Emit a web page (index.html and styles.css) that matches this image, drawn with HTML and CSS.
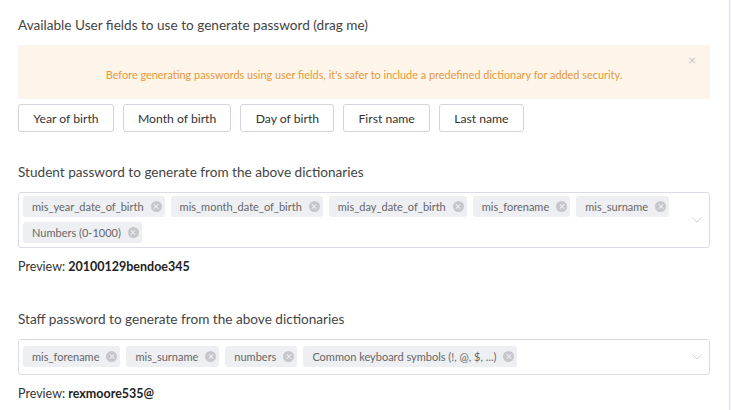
FILE: index.html
```html
<!DOCTYPE html>
<html lang="en">
<head>
    <meta charset="UTF-8">
    <meta name="viewport" content="width=device-width, initial-scale=1.0">
    <title>Password generator settings</title>
    <link rel="stylesheet" href="styles.css">
</head>
<body>

    <div class="page">
        <h3 class="section-title">Available User fields to use to generate password (drag me)</h3>

        <div class="alert">
            <p>Before generating passwords using user fields, it's safer to include a predefined dictionary for added security.</p>
            <span class="alert-close">&times;</span>
        </div>

        <div class="field-buttons">
            <button class="field-btn">Year of birth</button>
            <button class="field-btn">Month of birth</button>
            <button class="field-btn">Day of birth</button>
            <button class="field-btn">First name</button>
            <button class="field-btn">Last name</button>
        </div>

        <h3 class="section-title student-title">Student password to generate from the above dictionaries</h3>

        <div class="select-box">
            <div class="tags">
                <span class="tag">mis_year_date_of_birth <i class="tag-remove"></i></span>
                <span class="tag">mis_month_date_of_birth <i class="tag-remove"></i></span>
                <span class="tag">mis_day_date_of_birth <i class="tag-remove"></i></span>
                <span class="tag">mis_forename <i class="tag-remove"></i></span>
                <span class="tag">mis_surname <i class="tag-remove"></i></span>
                <span class="tag">Numbers (0-1000) <i class="tag-remove"></i></span>
            </div>
            <svg class="chevron" width="10" height="6" viewBox="0 0 10 6"><path d="M0.5 0.5 L5 5 L9.5 0.5" fill="none" stroke="#cfcfd8" stroke-width="1"/></svg>
        </div>

        <p class="preview">Preview: <strong>20100129bendoe345</strong></p>

        <h3 class="section-title staff-title">Staff password to generate from the above dictionaries</h3>

        <div class="select-box">
            <div class="tags">
                <span class="tag">mis_forename <i class="tag-remove"></i></span>
                <span class="tag">mis_surname <i class="tag-remove"></i></span>
                <span class="tag">numbers <i class="tag-remove"></i></span>
                <span class="tag">Common keyboard symbols (!, @, $, ...) <i class="tag-remove"></i></span>
            </div>
            <svg class="chevron" width="10" height="6" viewBox="0 0 10 6"><path d="M0.5 0.5 L5 5 L9.5 0.5" fill="none" stroke="#cfcfd8" stroke-width="1"/></svg>
        </div>

        <p class="preview">Preview: <strong>rexmoore535@</strong></p>
    </div>

</body>
</html>
```

FILE: styles.css
```css
/* Reset and Global Styles */
* {
    margin: 0;
    padding: 0;
    box-sizing: border-box;
}

body {
    font-family: Lato, "Open Sans", sans-serif;
    background-color: #f4f3fa;
    color: #333;
    width: 731px;
    height: 410px;
    overflow: hidden;
}

.page {
    width: 730px;
    height: 410px;
    background-color: white;
    border-right: 1px solid #e4e2f0;
    padding: 16px 19px 0 18px;
}

.section-title {
    font-size: 13.6px;
    font-weight: normal;
    color: #444;
    line-height: 19px;
}

.alert {
    position: relative;
    margin-top: 10px;
    height: 54px;
    background-color: #fdf5ea;
    border-radius: 3px;
    display: flex;
    align-items: center;
    justify-content: center;
    padding-top: 4px;
}

.alert p {
    font-size: 10.9px;
    color: #e8973a;
}

.alert-close {
    position: absolute;
    top: 6px;
    right: 14px;
    font-size: 14px;
    color: #c8c8c8;
}

.field-buttons {
    display: flex;
    gap: 9px;
    margin-top: 5px;
}

.field-btn {
    height: 28px;
    padding: 0 14.2px;
    background-color: white;
    border: 1px solid #d4d3de;
    border-radius: 3px;
    font-family: inherit;
    font-size: 12.2px;
    color: #333;
}

.student-title {
    margin-top: 31px;
}

.staff-title {
    margin-top: 36px;
}

.select-box {
    margin-top: 10px;
    min-height: 36px;
    border: 1px solid #dcdae6;
    border-radius: 3px;
    padding: 3px 4px 4px;
    display: flex;
    align-items: center;
}

.tags {
    flex: 1;
    display: flex;
    flex-wrap: wrap;
    gap: 5px 6px;
}

.tag {
    display: inline-flex;
    align-items: center;
    height: 21px;
    padding: 0 3px 0 9px;
    background-color: #eeeff2;
    border-radius: 3px;
    font-size: 11px;
    color: #666;
}

.tag-remove {
    position: relative;
    display: inline-block;
    width: 11px;
    height: 11px;
    margin-left: 7px;
    border-radius: 50%;
    background-color: #c6c6cc;
}

.tag-remove::before,
.tag-remove::after {
    content: "";
    position: absolute;
    left: 2.5px;
    top: 5px;
    width: 6px;
    height: 1px;
    background-color: #eeeff2;
    transform: rotate(45deg);
}

.tag-remove::after {
    transform: rotate(-45deg);
}

.chevron {
    margin: 0 3px 0 10px;
}

.preview {
    margin-top: 11px;
    font-size: 12.5px;
    color: #333;
}

.preview strong {
    color: #222;
}
```
